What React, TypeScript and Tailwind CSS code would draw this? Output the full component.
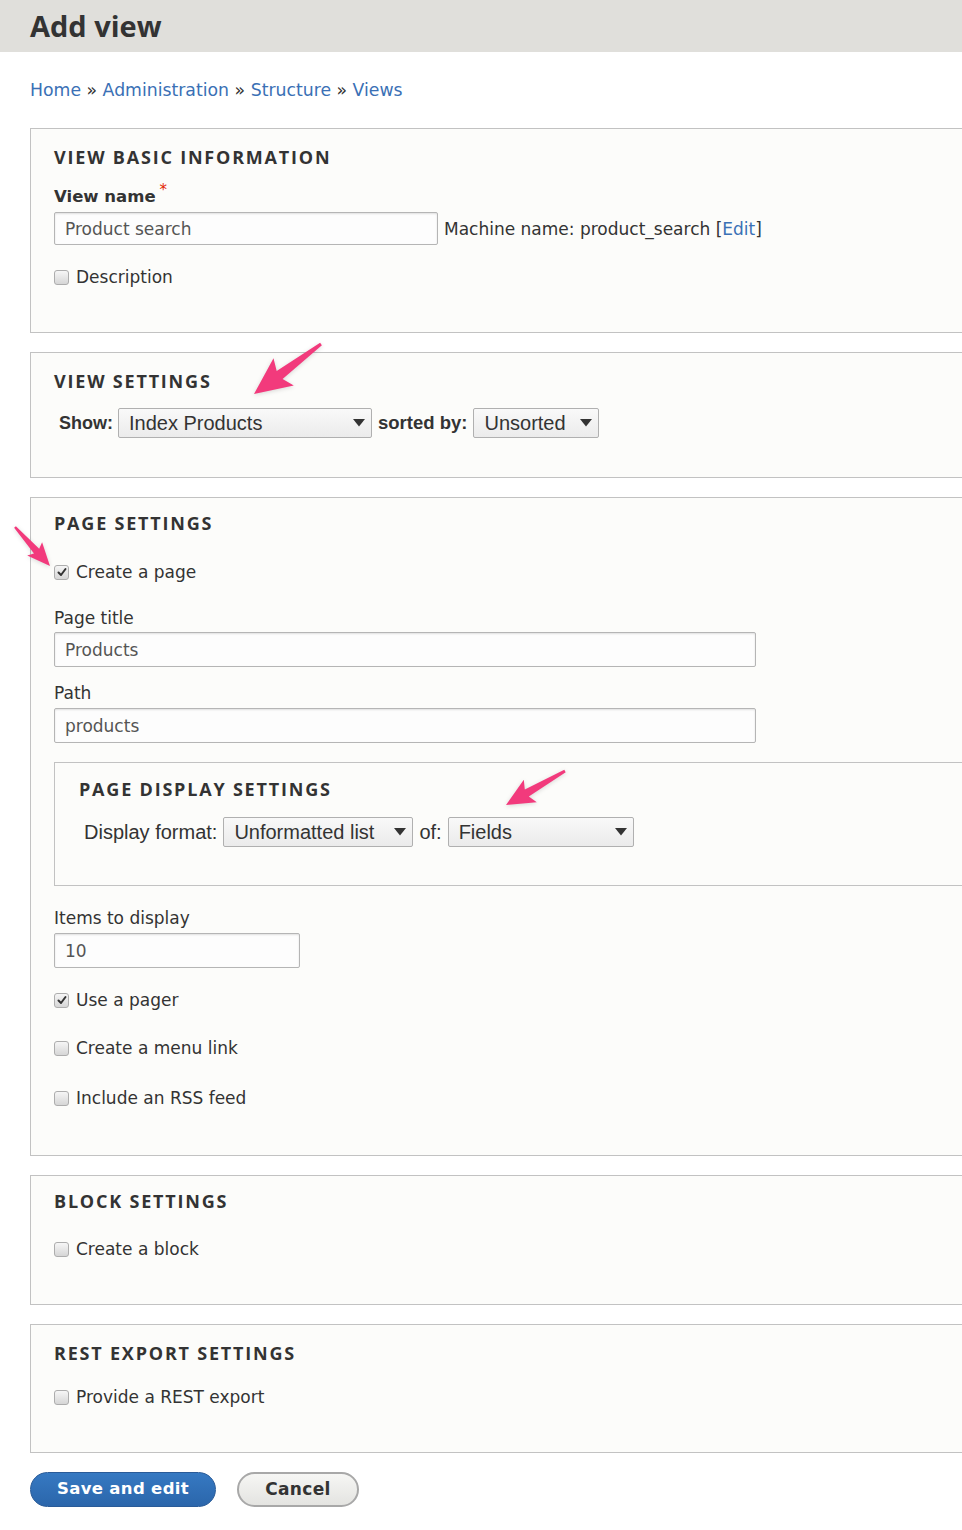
import React from 'react';

const pts = (tx: number, ty: number, px: number, py: number, L: number, H: number, w0: number, w1: number, barb: number) => {
  const len = Math.hypot(px - tx, py - ty);
  const ux = (px - tx) / len;
  const uy = (py - ty) / len;
  const nx = -uy;
  const ny = ux;
  const Nx = px - ux * L;
  const Ny = py - uy * L;
  const Bx = Nx - ux * barb;
  const By = Ny - uy * barb;
  return [
    [tx + nx * w0, ty + ny * w0],
    [Nx + nx * w1, Ny + ny * w1],
    [Bx + nx * H, By + ny * H],
    [px, py],
    [Bx - nx * H, By - ny * H],
    [Nx - nx * w1, Ny - ny * w1],
    [tx - nx * w0, ty - ny * w0],
  ]
    .map((p) => p.map((v) => v.toFixed(1)).join(','))
    .join(' ');
};

const Checkbox = ({ checked = false }: { checked?: boolean }) => (
  <span className="w-[15px] h-[15px] shrink-0 rounded-[3px] border border-[#adadad] bg-linear-to-b from-[#f6f6f6] to-[#d6d6d6] flex items-center justify-center">
    {checked && (
      <svg width="10" height="10" viewBox="0 0 10 10">
        <path d="M1.5 5.5 L4 8 L8.5 2" fill="none" stroke="#333" strokeWidth="2" strokeLinecap="round" strokeLinejoin="round" />
      </svg>
    )}
  </span>
);

const CheckRow = ({ label, checked, className = '' }: { label: string; checked?: boolean; className?: string }) => (
  <label className={`flex items-center gap-[7px] leading-[24px] ${className}`}>
    <Checkbox checked={checked} />
    <span>{label}</span>
  </label>
);

const TextInput = ({ value, w, h = 'h-[35px]' }: { value: string; w: string; h?: string }) => (
  <div className={`${w} ${h} border border-[#b5b5b5] rounded-[2px] bg-[#fdfdfd] shadow-[inset_0_1px_2px_rgba(0,0,0,0.12)] flex items-center px-[10px] pt-[3px] text-[#555]`}>
    {value}
  </div>
);

const Select = ({ value, w }: { value: string; w: string }) => (
  <div className={`${w} h-[30px] border border-[#b0b0b0] rounded-[2px] bg-linear-to-b from-[#f9f9f9] to-[#ebebeb] flex items-center justify-between pl-[10px] pr-[6px] text-[20px] text-[#333]`}>
    <span>{value}</span>
    <svg width="12" height="8" viewBox="0 0 12 8">
      <path d="M0 0 H12 L6 7.5 Z" fill="#333" />
    </svg>
  </div>
);

const Legend = ({ children }: { children: React.ReactNode }) => (
  <h2 className="font-['Open_Sans',sans-serif] font-bold text-[18px] tracking-[0.1em] uppercase leading-[24px] text-[#333]">
    {children}
  </h2>
);

const Fieldset = ({ className = '', children }: { className?: string; children: React.ReactNode }) => (
  <section className={`-mr-[40px] border border-[#c2c2c2] bg-[#fcfcfa] pl-[23px] ${className}`}>{children}</section>
);

export default function App() {
  return (
    <div className="relative w-full min-h-[1530px] bg-white overflow-hidden font-['DejaVu_Sans',sans-serif] text-[17px] text-[#333]">
      <header className="h-[52px] bg-[#e0dfdb] flex items-center pl-[30px] pb-[1px]">
        <h1 className="font-['Open_Sans',sans-serif] font-bold text-[29px] text-[#333] leading-none">Add view</h1>
      </header>

      <main className="pl-[30px]">
        <nav className="mt-[26px] leading-[24px] text-[17.3px]">
          <a className="text-[#3a70b5]">Home</a> » <a className="text-[#3a70b5]">Administration</a> »{' '}
          <a className="text-[#3a70b5]">Structure</a> » <a className="text-[#3a70b5]">Views</a>
        </nav>

        {/* View basic information */}
        <Fieldset className="mt-[26px] pt-[16px] pb-[43px]">
          <Legend>View basic information</Legend>
          <div className="mt-[16px] leading-[24px] font-bold text-[16.5px]">
            View name<sup className="text-[#e32700] font-normal text-[15px] ml-[4px]">*</sup>
          </div>
          <div className="mt-[3px] flex items-center gap-[6px]">
            <TextInput value="Product search" w="w-[384px]" h="h-[33px]" />
            <span className="pt-[3px]">
              Machine name: product_search [<a className="text-[#3a70b5]">Edit</a>]
            </span>
          </div>
          <CheckRow label="Description" className="mt-[20px]" />
        </Fieldset>

        {/* View settings */}
        <Fieldset className="mt-[19px] pt-[16px] pb-[39px]">
          <Legend>View settings</Legend>
          <div className="mt-[15px] pl-[5px] flex items-center font-['Liberation_Sans',sans-serif]">
            <span className="font-bold text-[18px] mr-[5px]">Show:</span>
            <Select value="Index Products" w="w-[254px]" />
            <span className="font-bold text-[18.5px] mx-[6px]">sorted by:</span>
            <Select value="Unsorted" w="w-[126px]" />
          </div>
        </Fieldset>

        {/* Page settings */}
        <Fieldset className="mt-[19px] pt-[13px] pb-[45px]">
          <Legend>Page settings</Legend>
          <CheckRow label="Create a page" checked className="mt-[25px]" />
          <div className="mt-[22px] leading-[24px]">Page title</div>
          <div className="mt-[2px]">
            <TextInput value="Products" w="w-[702px]" />
          </div>
          <div className="mt-[14px] leading-[24px]">Path</div>
          <div className="mt-[3px]">
            <TextInput value="products" w="w-[702px]" />
          </div>

          <section className="mt-[19px] border border-[#c2c2c2] bg-[#fcfcfa] pl-[24px] pt-[14px] pb-[38px]">
            <Legend>Page display settings</Legend>
            <div className="mt-[16px] pl-[5px] flex items-center font-['Liberation_Sans',sans-serif] text-[20px]">
              <span className="mr-[6px]">Display format:</span>
              <Select value="Unformatted list" w="w-[190px]" />
              <span className="mx-[6px]">of:</span>
              <Select value="Fields" w="w-[186px]" />
            </div>
          </section>

          <div className="mt-[20px] leading-[24px]">Items to display</div>
          <div className="mt-[3px]">
            <TextInput value="10" w="w-[246px]" />
          </div>
          <CheckRow label="Use a pager" checked className="mt-[20px]" />
          <CheckRow label="Create a menu link" className="mt-[24px]" />
          <CheckRow label="Include an RSS feed" className="mt-[26px]" />
        </Fieldset>

        {/* Block settings */}
        <Fieldset className="mt-[19px] pt-[13px] pb-[43px]">
          <Legend>Block settings</Legend>
          <CheckRow label="Create a block" className="mt-[24px]" />
        </Fieldset>

        {/* REST export settings */}
        <Fieldset className="mt-[19px] pt-[16px] pb-[43px]">
          <Legend>REST export settings</Legend>
          <CheckRow label="Provide a REST export" className="mt-[20px]" />
        </Fieldset>

        <div className="mt-[19px] flex items-center gap-[21px]">
          <button className="w-[186px] h-[35px] rounded-full border border-[#2a5b98] bg-linear-to-b from-[#3679c2] to-[#2b66ab] text-white font-bold text-[16.5px] tracking-[0.02em]">
            Save and edit
          </button>
          <button className="w-[122px] h-[35px] rounded-full border-2 border-[#a8a8a8] bg-linear-to-b from-[#f6f6f4] to-[#e4e4e1] text-[#333] font-bold text-[17px] tracking-[0.02em]">
            Cancel
          </button>
        </div>
      </main>

      <svg className="absolute top-0 left-0 pointer-events-none drop-shadow-sm" width="962" height="1530">
        <polygon points={pts(321, 344, 254, 394, 32, 17, 1.5, 5, 5)} fill="#f23a7c" />
        <polygon points={pts(15, 527, 50, 566, 20, 10, 1.2, 3.5, 3)} fill="#f23a7c" />
        <polygon points={pts(565, 771, 506, 805, 24, 13, 1.5, 4, 4)} fill="#f23a7c" />
      </svg>
    </div>
  );
}
